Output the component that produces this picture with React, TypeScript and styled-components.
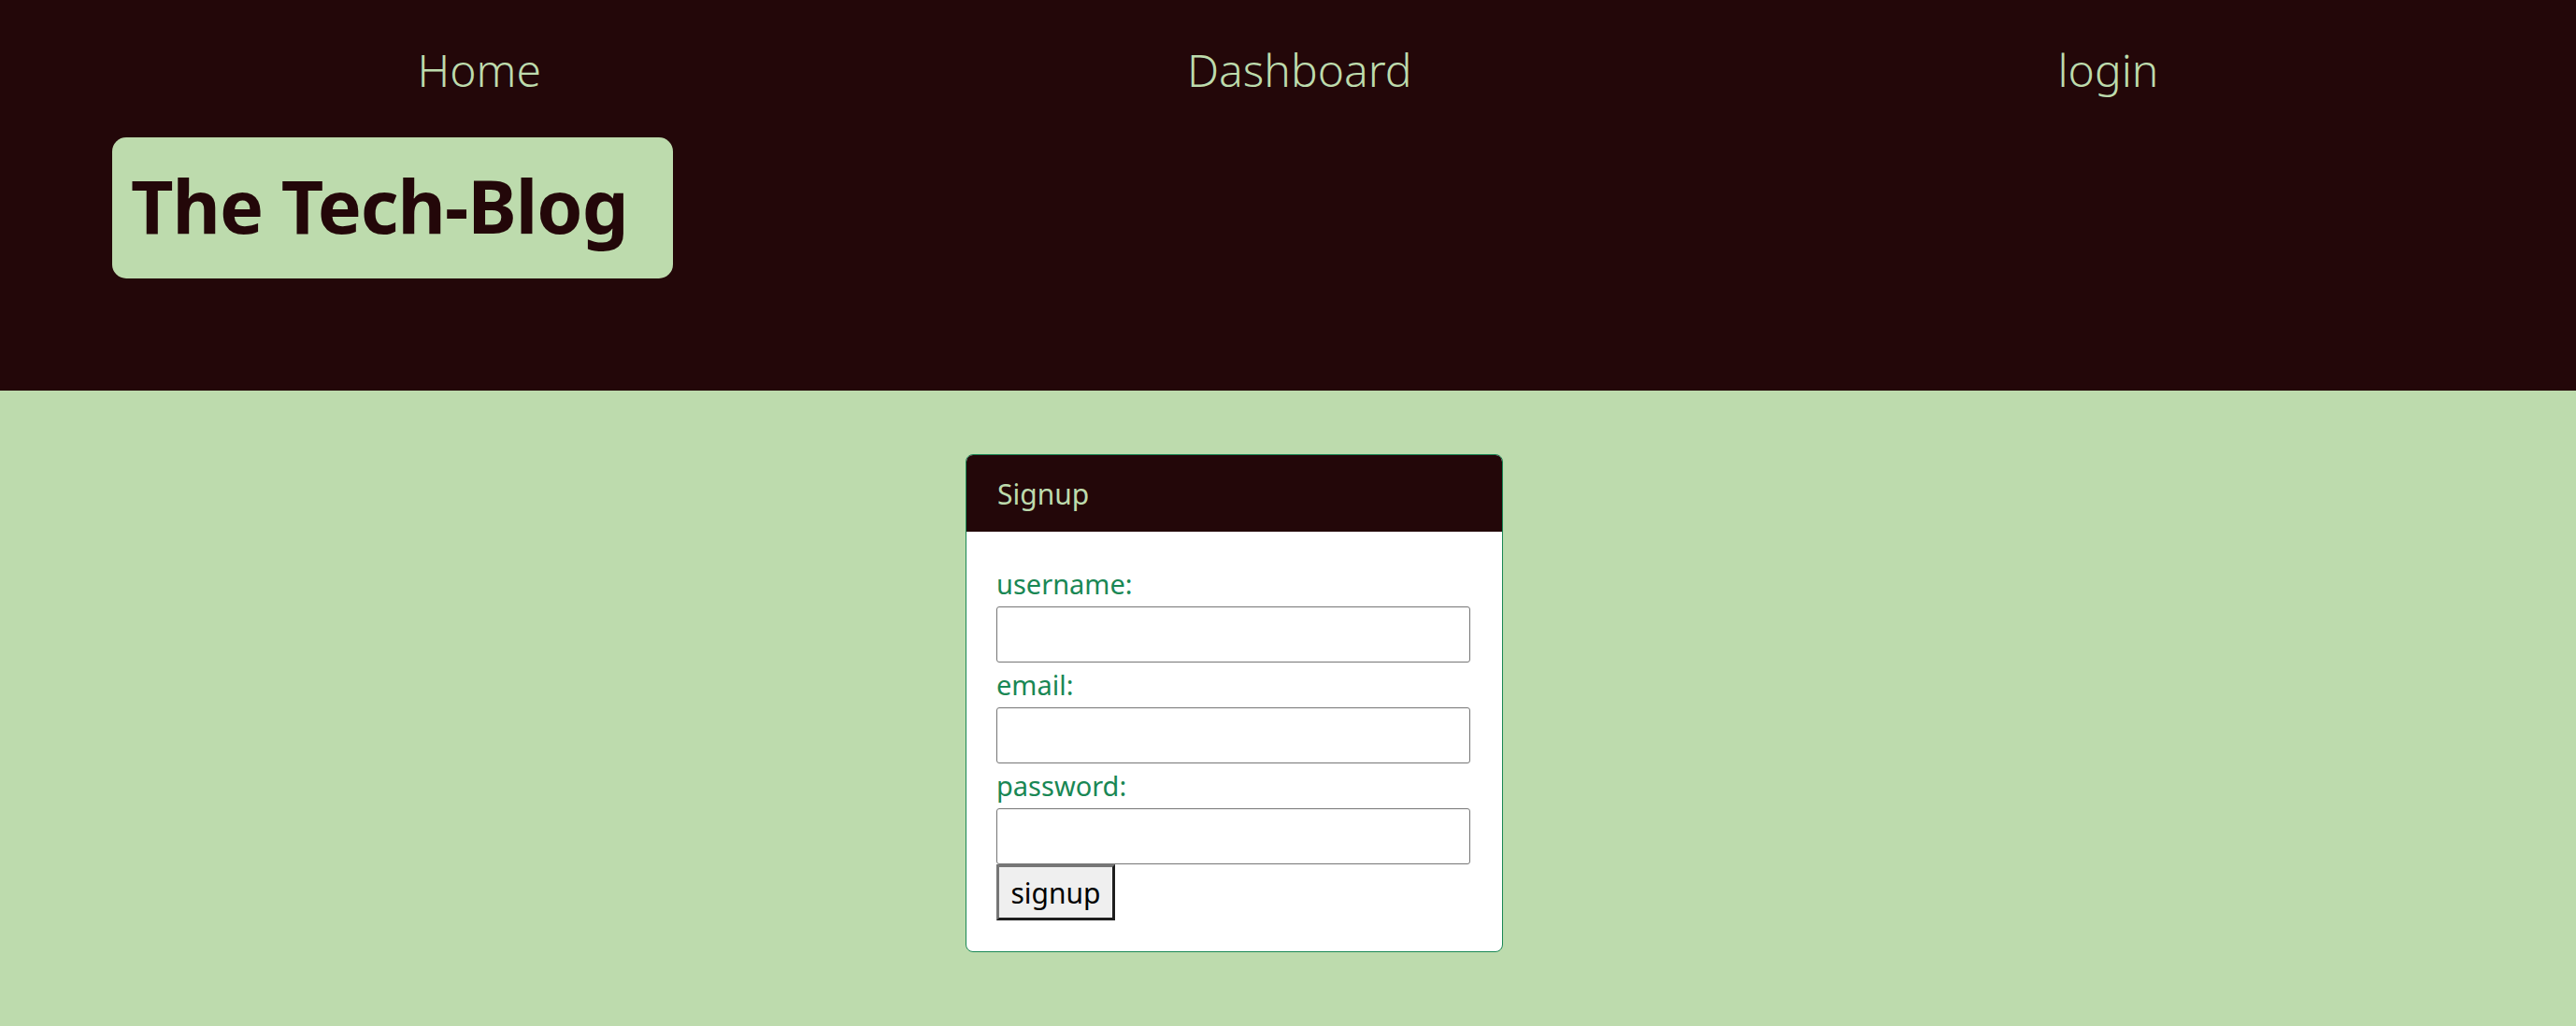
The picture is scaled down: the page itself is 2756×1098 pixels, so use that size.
import * as React from "react";
import styled, { createGlobalStyle } from "styled-components";

const dark = "#230709";
const light = "#bddbad";
const success = "#198754";

const GlobalStyle = createGlobalStyle`
  html, body {
    margin: 0;
    padding: 0;
    background: ${light};
    font-family: "Noto Sans", "Open Sans", sans-serif;
  }
`;

const Header = styled.header`
  background: ${dark};
  height: 418px;
  box-sizing: border-box;
  padding-top: 45px;
`;

const Nav = styled.nav`
  display: flex;
  justify-content: space-around;
  padding: 0 101px;
`;

const NavLink = styled.a`
  color: ${light};
  font-size: 48px;
  font-weight: 300;
  line-height: 60px;
  text-decoration: none;
  cursor: pointer;
`;

const Brand = styled.div`
  display: flex;
  align-items: center;
  box-sizing: border-box;
  margin: 42px 0 0 120px;
  width: 600px;
  height: 151px;
  padding: 0 0 6px 20px;
  background: ${light};
  border-radius: 15px;
`;

const BrandTitle = styled.h1`
  margin: 0;
  color: ${dark};
  font-size: 79px;
  font-weight: 700;
  letter-spacing: -1px;
`;

const Main = styled.main`
  padding: 68px 0 80px 1033px;
`;

const Card = styled.section`
  width: 575px;
  box-sizing: border-box;
  background: #fff;
  border: 1px solid ${success};
  border-radius: 8px;
  overflow: hidden;
`;

const CardHeader = styled.div`
  height: 82px;
  box-sizing: border-box;
  display: flex;
  align-items: center;
  padding: 0 33px 0;
  background: ${dark};
  color: ${light};
  font-size: 30px;
`;

const Form = styled.form`
  display: flex;
  flex-direction: column;
  align-items: flex-start;
  padding: 32px 32px 33px;
`;

const Label = styled.label`
  color: ${success};
  font-size: 29px;
  line-height: 48px;
`;

const Input = styled.input`
  width: 507px;
  height: 60px;
  box-sizing: border-box;
  border: 1px solid #767676;
  border-radius: 3px;
  font-size: 28px;
  padding: 0 6px;
`;

const SubmitButton = styled.button`
  height: 60px;
  width: 127px;
  box-sizing: border-box;
  background: #efefef;
  border: 3px solid;
  border-color: #767676 #1e1e1e #1e1e1e #767676;
  color: #000;
  font-family: inherit;
  font-size: 30px;
  padding: 0;
  cursor: pointer;
`;

const App = () => {
  return (
    <>
      <GlobalStyle />
      <Header>
        <Nav>
          <NavLink>Home</NavLink>
          <NavLink>Dashboard</NavLink>
          <NavLink>login</NavLink>
        </Nav>
        <Brand>
          <BrandTitle>The Tech-Blog</BrandTitle>
        </Brand>
      </Header>
      <Main>
        <Card>
          <CardHeader>Signup</CardHeader>
          <Form onSubmit={(e) => e.preventDefault()}>
            <Label htmlFor="username">username:</Label>
            <Input id="username" type="text" />
            <Label htmlFor="email">email:</Label>
            <Input id="email" type="email" />
            <Label htmlFor="password">password:</Label>
            <Input id="password" type="password" />
            <SubmitButton type="submit">signup</SubmitButton>
          </Form>
        </Card>
      </Main>
    </>
  );
};

export default App;
